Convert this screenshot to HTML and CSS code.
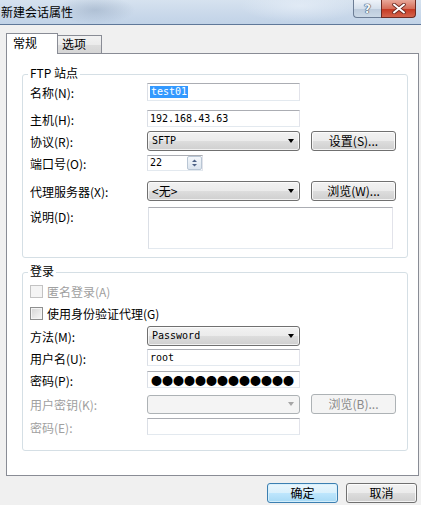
FILE: index.html
```html
<!DOCTYPE html>
<html lang="zh-CN">
<head>
<meta charset="utf-8">
<title>新建会话属性</title>
<link rel="stylesheet" href="styles.css">
</head>
<body>
<div class="titlebar">
  <span class="title">新建会话属性</span>
  <div class="caption">
    <div class="cbtn help">?</div>
    <div class="cbtn close">
      <svg width="14" height="11" viewBox="0 0 14 11">
        <path d="M2 1.5 L12 9.5 M12 1.5 L2 9.5" stroke="#6b2a22" stroke-width="3.6" stroke-linecap="round"/>
        <path d="M2 1.5 L12 9.5 M12 1.5 L2 9.5" stroke="#ffffff" stroke-width="2" stroke-linecap="round"/>
      </svg>
    </div>
  </div>
</div>

<div class="client">
  <div class="tabs">
    <div class="tab active">常规</div>
    <div class="tab">选项</div>
  </div>

  <div class="panel">
    <div class="group g1">
      <div class="legend">FTP 站点</div>

      <div class="row">
        <span class="lbl">名称(N):</span>
        <div class="edit h18"><span class="val sel">test01</span></div>
      </div>
      <div class="row m9">
        <span class="lbl">主机(H):</span>
        <div class="edit h17"><span class="val">192.168.43.63</span></div>
      </div>
      <div class="row m4">
        <span class="lbl">协议(R):</span>
        <div class="combo"><span class="val">SFTP</span><span class="arrow"></span></div>
        <div class="btn side">设置(S)...</div>
      </div>
      <div class="row m4">
        <span class="lbl">端口号(O):</span>
        <div class="spin">
          <span class="val">22</span>
          <div class="spinbtn">
            <svg width="13" height="12" viewBox="0 0 13 12">
              <path d="M4 5 L6.5 2.5 L9 5 Z" fill="#4d6185"/>
              <path d="M4 7 L6.5 9.5 L9 7 Z" fill="#4d6185"/>
            </svg>
          </div>
        </div>
      </div>
      <div class="row m10">
        <span class="lbl">代理服务器(X):</span>
        <div class="combo"><span class="val cjk">&lt;无&gt;</span><span class="arrow"></span></div>
        <div class="btn side">浏览(W)...</div>
      </div>
      <div class="row m6 top">
        <span class="lbl lbl-top">说明(D):</span>
        <div class="memo"></div>
      </div>
    </div>

    <div class="group g2">
      <div class="legend">登录</div>

      <div class="check-row disabled">
        <span class="box off"></span><span>匿名登录(A)</span>
      </div>
      <div class="check-row m9">
        <span class="box"></span><span>使用身份验证代理(G)</span>
      </div>
      <div class="row m6">
        <span class="lbl">方法(M):</span>
        <div class="combo"><span class="val">Password</span><span class="arrow"></span></div>
      </div>
      <div class="row m3">
        <span class="lbl">用户名(U):</span>
        <div class="edit h17"><span class="val">root</span></div>
      </div>
      <div class="row m5">
        <span class="lbl">密码(P):</span>
        <div class="edit h17"><span class="dots">●●●●●●●●●●●●●</span></div>
      </div>
      <div class="row m6">
        <span class="lbl dim">用户密钥(K):</span>
        <div class="combo off h19"><span class="val"></span><span class="arrow"></span></div>
        <div class="btn side off">浏览(B)...</div>
      </div>
      <div class="row m4">
        <span class="lbl dim">密码(E):</span>
        <div class="edit h17"></div>
      </div>
    </div>
  </div>

  <div class="footer">
    <div class="btn dlg default">确定</div>
    <div class="btn dlg">取消</div>
  </div>
</div>
</body>
</html>
```

FILE: styles.css
```css
* { box-sizing: border-box; }

html, body { margin: 0; padding: 0; }

body {
  width: 421px;
  height: 505px;
  overflow: hidden;
  background: #f0f0f0;
  font-family: "Noto Sans CJK SC", "Noto Sans", sans-serif;
  font-size: 12px;
  color: #000;
}

/* ---------- title bar ---------- */
.titlebar {
  height: 25px;
  display: flex;
  align-items: flex-start;
  background:
    radial-gradient(ellipse 40px 14px at 95px 10px, rgba(140, 160, 185, 0.45), rgba(140, 160, 185, 0) 100%),
    radial-gradient(ellipse 60px 16px at 300px 6px, rgba(235, 242, 250, 0.6), rgba(235, 242, 250, 0) 100%),
    linear-gradient(to bottom, #d6e2ef 0%, #c9d8ea 60%, #c1d3e7 100%);
  border-bottom: 1px solid #5f7899;
}

.title {
  padding-left: 1px;
  line-height: 24px;
  font-size: 12px;
}

.caption {
  margin-left: auto;
  margin-right: 5px;
  display: flex;
  height: 18px;
}

.cbtn {
  height: 18px;
  display: flex;
  align-items: center;
  justify-content: center;
}

.help {
  width: 28px;
  border: 1px solid #6c7d95;
  border-top: none;
  border-right: none;
  border-bottom-left-radius: 4px;
  background: linear-gradient(to bottom, #eef3f9 0%, #d5e0ec 50%, #bccbdc 51%, #cbd8e6 100%);
  color: #f4f7fb;
  font-family: "DejaVu Sans", sans-serif;
  font-weight: bold;
  font-size: 12px;
  line-height: 14px;
  text-shadow: 0 0 1px #34465e, 0 0 1px #34465e, 0 0 1px #34465e;
}

.close {
  width: 35px;
  border: 1px solid #6e2b22;
  border-top: none;
  border-bottom-right-radius: 4px;
  background: linear-gradient(to bottom, #e9a899 0%, #d66e59 50%, #c4361f 51%, #d4644d 100%);
}

/* ---------- client ---------- */
.client {
  padding: 8px 2px 0 6px;
}

.tabs {
  display: flex;
  align-items: flex-end;
  height: 21px;
  margin-bottom: -1px;
  position: relative;
  z-index: 1;
}

.tab {
  border: 1px solid #898c95;
  border-bottom: none;
  line-height: 14px;
}

.tab.active {
  width: 52px;
  height: 21px;
  background: #fff;
  padding: 2px 0 0 6px;
  position: relative;
  z-index: 2;
}

.tab:not(.active) {
  width: 45px;
  height: 18px;
  margin-left: -1px;
  margin-bottom: 1px;
  padding: 1px 0 0 4px;
  background: linear-gradient(to bottom, #f2f2f2 0%, #ebebeb 50%, #dddddd 51%, #d5d5d5 100%);
}

.panel {
  height: 423px;
  border: 1px solid #898c95;
  background: #fff;
  padding: 0 10px 0 15px;
}

/* ---------- group boxes ---------- */
.group {
  position: relative;
  border: 1px solid #d5dfe5;
  border-radius: 3px;
  padding-left: 7px;
}

.g1 {
  margin-top: 20px;
  padding-top: 8px;
  padding-bottom: 8px;
}

.g2 {
  margin-top: 14px;
  padding-top: 12px;
  padding-bottom: 15px;
}

.legend {
  position: absolute;
  top: -9px;
  left: 5px;
  padding: 0 2px;
  background: #fff;
  line-height: 14px;
}

/* ---------- rows ---------- */
.row {
  display: flex;
  align-items: center;
}

.row.top { align-items: flex-start; }

.m3 { margin-top: 3px; }
.m4 { margin-top: 4px; }
.m5 { margin-top: 5px; }
.m6 { margin-top: 6px; }
.m9 { margin-top: 9px; }
.m10 { margin-top: 10px; }

.lbl {
  width: 117px;
  flex: none;
  line-height: 14px;
  padding-top: 2px;
  white-space: nowrap;
}

.lbl-top { padding-top: 3px; }

.dim { color: #a0a0a0; }

/* ---------- controls ---------- */
.edit {
  width: 153px;
  border: 1px solid;
  border-color: #abadb3 #e2e3ea #e3e9ef #dbdfe6;
  background: #fff;
  display: flex;
  align-items: center;
  padding-left: 2px;
}

.h17 { height: 17px; }
.h18 { height: 18px; }
.h19 { height: 19px !important; }

.val {
  font-family: "DejaVu Sans Mono", monospace;
  font-size: 10px;
  line-height: 12px;
  white-space: nowrap;
}

.val.cjk {
  font-family: "Noto Sans CJK SC", sans-serif;
  font-size: 12px;
}

.sel {
  background: #3399ff;
  color: #fff;
  padding: 0 1px;
}

.dots {
  font-family: "Noto Sans CJK SC", sans-serif;
  font-size: 11px;
  line-height: 12px;
  letter-spacing: 0;
  margin-left: 1px;
}

.combo {
  width: 153px;
  height: 20px;
  border: 1px solid #707070;
  border-radius: 3px;
  background: linear-gradient(to bottom, #f2f2f2 0%, #ebebeb 50%, #dddddd 51%, #cfcfcf 100%);
  box-shadow: inset 0 0 0 1px rgba(255, 255, 255, 0.7);
  display: flex;
  align-items: center;
  justify-content: space-between;
  padding: 0 5px 0 4px;
}

.arrow {
  width: 0;
  height: 0;
  border-left: 3.5px solid transparent;
  border-right: 3.5px solid transparent;
  border-top: 4px solid #000;
}

.combo.off {
  border-color: #adb2b5;
  background: #f4f4f4;
  box-shadow: none;
}

.combo.off .arrow { border-top-color: #a6a6a6; }

.btn {
  height: 20px;
  border: 1px solid #707070;
  border-radius: 3px;
  background: linear-gradient(to bottom, #f2f2f2 0%, #ebebeb 50%, #dddddd 51%, #cfcfcf 100%);
  box-shadow: inset 0 0 0 1px rgba(255, 255, 255, 0.75);
  display: flex;
  align-items: center;
  justify-content: center;
  line-height: 14px;
  white-space: nowrap;
}

.btn.side {
  width: 85px;
  margin-left: 11px;
}

.btn.off {
  border-color: #adb2b5;
  background: #f4f4f4;
  box-shadow: none;
  color: #8a8a8a;
}

.spin {
  width: 56px;
  height: 16px;
  border: 1px solid;
  border-color: #abadb3 #e2e3ea #e3e9ef #dbdfe6;
  background: #fff;
  display: flex;
  align-items: center;
  justify-content: space-between;
  padding-left: 2px;
}

.spinbtn {
  width: 15px;
  height: 14px;
  border: 1px solid #b9c6d4;
  border-radius: 2px;
  background: linear-gradient(to bottom, #f4f7fb, #dbe4ee);
  display: flex;
  align-items: center;
  justify-content: center;
}

.memo {
  width: 245px;
  height: 42px;
  margin-left: 1px;
  border: 1px solid;
  border-color: #abadb3 #e2e3ea #e3e9ef #dbdfe6;
  background: #fff;
}

/* ---------- checkboxes ---------- */
.check-row {
  display: flex;
  align-items: center;
  gap: 4px;
  line-height: 14px;
  height: 13px;
}

.check-row.disabled { color: #a0a0a0; }

.box {
  width: 13px;
  height: 13px;
  flex: none;
  border: 1px solid #8e8f8f;
  background: linear-gradient(135deg, #d4d4d4 0%, #e8e8e8 55%, #f7f7f7 100%);
  box-shadow: inset 0 0 0 1px #f4f4f4;
}

.box.off {
  border-color: #c3c3c3;
  background: #f4f4f4;
  box-shadow: none;
}

/* ---------- footer ---------- */
.footer {
  display: flex;
  justify-content: flex-end;
  gap: 8px;
  margin-top: 7px;
  padding-right: 2px;
}

.btn.dlg {
  width: 71px;
}

.btn.default {
  border-color: #3c7fb1;
  background: linear-gradient(to bottom, #eaf6fd 0%, #d9f0fc 50%, #bee6fd 51%, #a7d9f5 100%);
  box-shadow: inset 0 0 0 1px rgba(215, 240, 252, 0.9);
}
```
